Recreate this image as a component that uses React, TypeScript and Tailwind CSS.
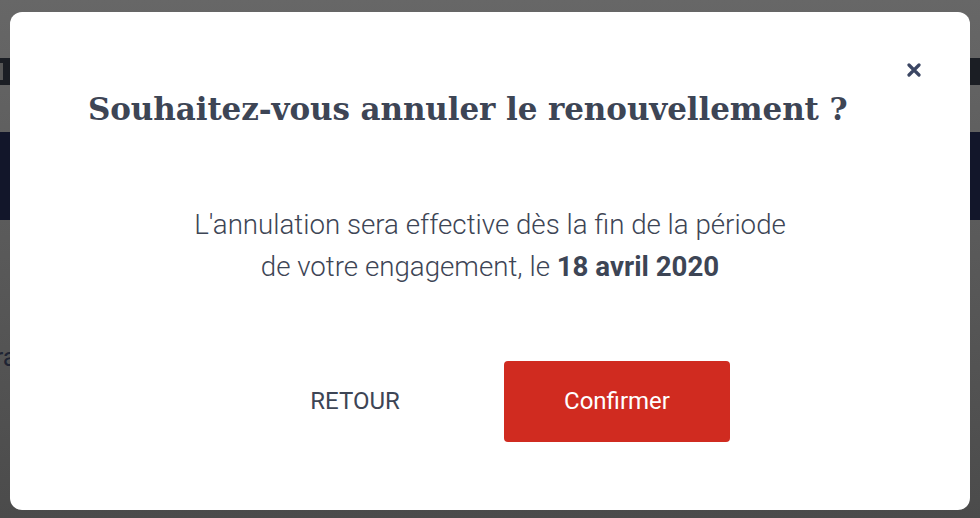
import React from "react";

const CloseIcon = () => (
  <svg width="14" height="14" viewBox="0 0 14 14" fill="none">
    <path d="M2 2L12 12M12 2L2 12" stroke="#3b4663" strokeWidth="3.2" strokeLinecap="round" />
  </svg>
);

const BackgroundPage = () => (
  <div className="h-[518px] w-[980px] overflow-hidden bg-gradient-to-b from-[#676767] to-[#4b4b4b]">
    <div className="h-[58px]" />
    <div className="flex h-[27px] items-center bg-[#1b1e24]">
      <div className="h-[17px] w-[3px] bg-[#565656]" />
    </div>
    <div className="h-[47px]" />
    <div className="h-[88px] bg-[#12162a]" />
    <div className="-ml-[14px] mt-[118px] text-[26px] text-[#1f2433]" style={{ fontFamily: "Roboto, sans-serif" }}>
      tra
    </div>
  </div>
);

const Modal = () => (
  <div className="fixed inset-0 flex items-start justify-center pt-[12px]">
    <div className="relative h-[498px] w-[960px] rounded-[12px] bg-white pl-[78px] pr-[78px] pt-[77px]">
      <button className="absolute right-[49px] top-[51px] flex h-[14px] w-[14px] items-center justify-center">
        <CloseIcon />
      </button>
      <h1
        className="text-[31px] font-bold leading-[40px] text-[#3d4555] whitespace-nowrap"
        style={{ fontFamily: '"DejaVu Serif", serif', letterSpacing: "-0.1px" }}
      >
        Souhaitez-vous annuler le renouvellement ?
      </h1>
      <p
        className="mt-[75px] text-center text-[27.7px] font-light leading-[42px] text-[#3d4555]"
        style={{ fontFamily: "Roboto, sans-serif" }}
      >
        L'annulation sera effective dès la fin de la période
        <br />
        de votre engagement, le <span className="font-bold">18 avril 2020</span>
      </p>
      <div className="mr-[8px] mt-[73px] flex justify-center gap-[36px]" style={{ fontFamily: "Roboto, sans-serif" }}>
        <button className="h-[81px] w-[226px] pb-[1px] text-[24px] text-[#3d4555]">RETOUR</button>
        <button className="h-[81px] w-[226px] rounded-[4px] bg-[#d02b20] pb-[1px] text-[24px] text-white">Confirmer</button>
      </div>
    </div>
  </div>
);

export default function App() {
  return (
    <div className="relative h-[518px] w-[980px]">
      <BackgroundPage />
      <Modal />
    </div>
  );
}
